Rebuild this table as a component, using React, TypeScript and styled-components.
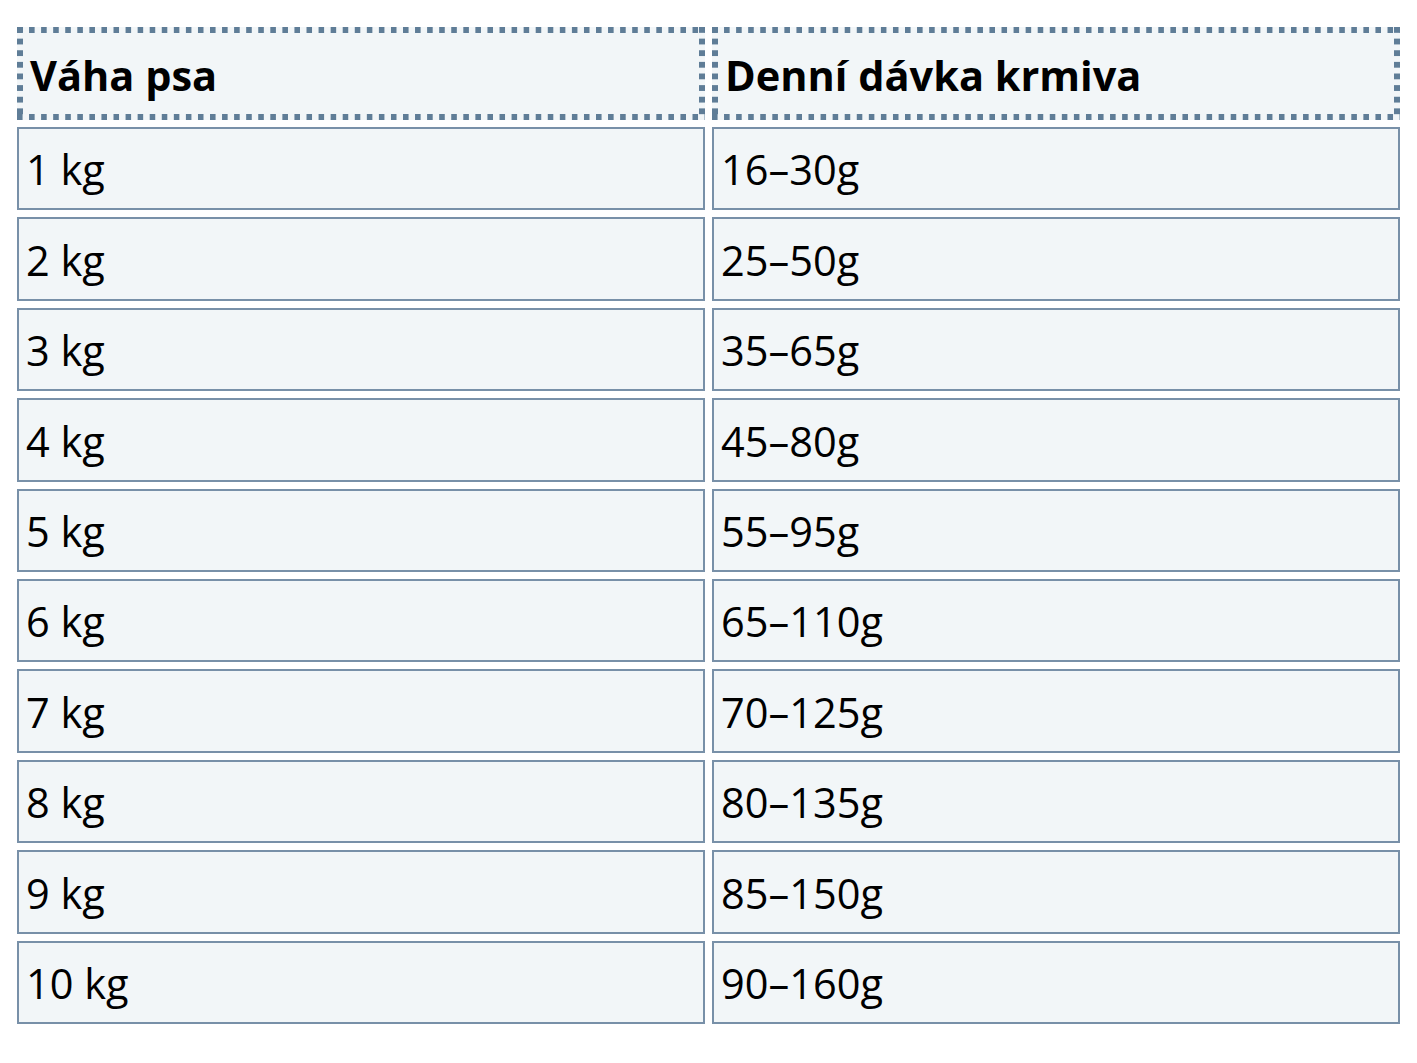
import React from "react";
import styled, { createGlobalStyle } from "styled-components";

const Global = createGlobalStyle`
  html, body { margin: 0; padding: 0; background: #ffffff; }
  body { font-family: "Open Sans", "Noto Sans", sans-serif; color: #000; }
`;

const Wrap = styled.div`
  padding: 20px 10px 10px 10px;
`;

const Table = styled.table`
  width: 100%;
  border-collapse: separate;
  border-spacing: 7px;
  table-layout: fixed;
`;

const dot = "#5f7d97";
const hDots = `linear-gradient(to right, ${dot} 0 6px, transparent 6px 12px)`;
const vDots = `linear-gradient(to bottom, ${dot} 0 6px, transparent 6px 12px)`;

const HeadCell = styled.th`
  height: 93px;
  box-sizing: border-box;
  padding: 4px 8px 0 13px;
  text-align: left;
  font-weight: 700;
  font-size: 41.5px;
  line-height: 1;
  color: #000;
  vertical-align: middle;
  background-color: #f2f6f8;
  background-image: ${hDots}, ${hDots}, ${vDots}, ${vDots};
  background-position: left top, left bottom, left top, right top;
  background-size: 12px 6px, 12px 6px, 6px 12px, 6px 12px;
  background-repeat: round no-repeat, round no-repeat, no-repeat round, no-repeat round;
`;

const Cell = styled.td`
  height: 83.4px;
  box-sizing: border-box;
  padding: 3px 7px 0 7px;
  border: 2px solid #7890a8;
  background: #f2f6f8;
  font-size: 41.5px;
  line-height: 1;
  color: #000;
  vertical-align: middle;
`;

const rows: [string, string][] = [
  ["1 kg", "16–30g"],
  ["2 kg", "25–50g"],
  ["3 kg", "35–65g"],
  ["4 kg", "45–80g"],
  ["5 kg", "55–95g"],
  ["6 kg", "65–110g"],
  ["7 kg", "70–125g"],
  ["8 kg", "80–135g"],
  ["9 kg", "85–150g"],
  ["10 kg", "90–160g"],
];

export default function App() {
  return (
    <Wrap>
      <Global />
      <Table>
        <thead>
          <tr>
            <HeadCell>Váha psa</HeadCell>
            <HeadCell>Denní dávka krmiva</HeadCell>
          </tr>
        </thead>
        <tbody>
          {rows.map(([w, d]) => (
            <tr key={w}>
              <Cell>{w}</Cell>
              <Cell>{d}</Cell>
            </tr>
          ))}
        </tbody>
      </Table>
    </Wrap>
  );
}
